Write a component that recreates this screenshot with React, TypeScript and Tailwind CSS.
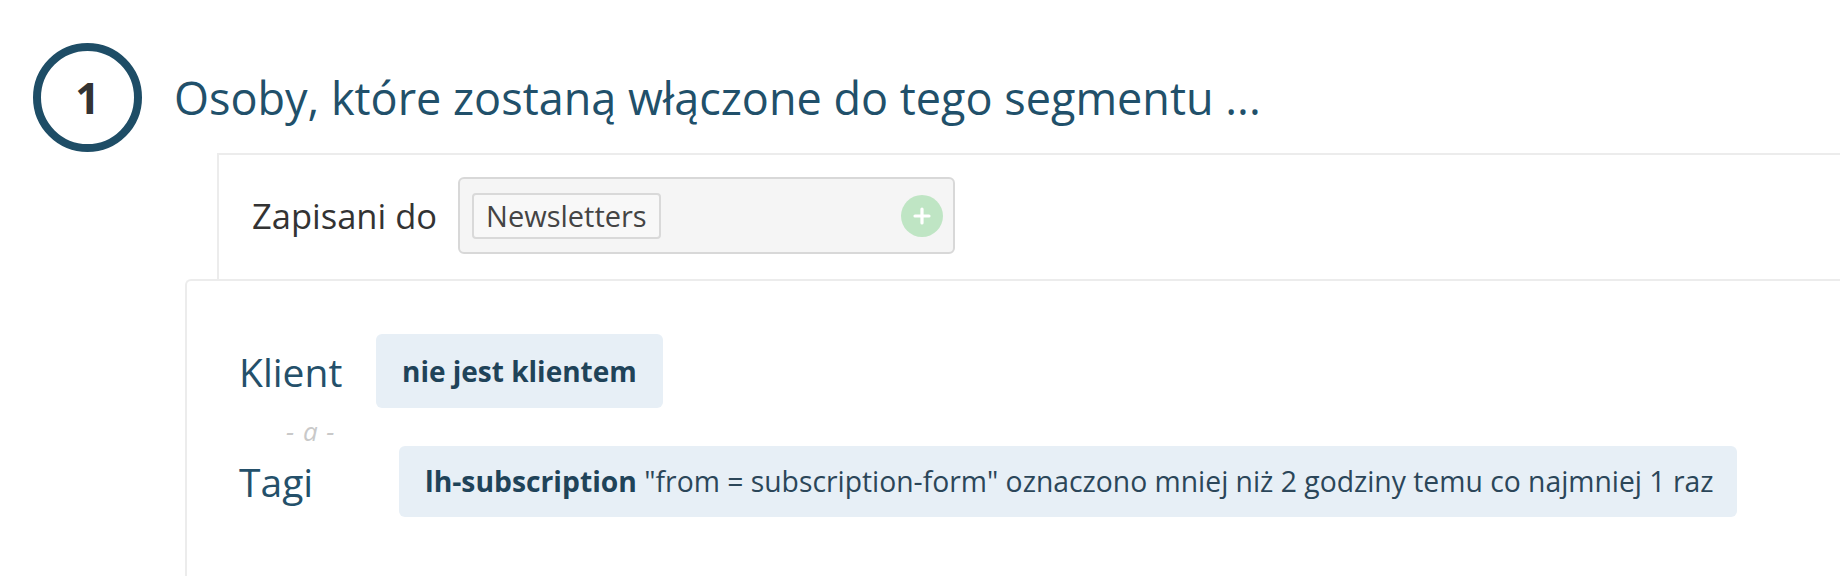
export default function App() {
  return (
    <div className="h-[576px] w-[1840px] overflow-hidden bg-white font-['Open_Sans',sans-serif]">
      <div className="flex items-center pl-[33px] pt-[43px]">
        <div className="flex h-[109px] w-[109px] shrink-0 items-center justify-center rounded-full border-[8px] border-[#1e4d66] text-[43px] font-bold leading-none text-[#333]">
          1
        </div>
        <h1 className="ml-[32px] whitespace-nowrap text-[45px] leading-none text-[#21506a]">
          Osoby, które zostaną włączone do tego segmentu ...
        </h1>
      </div>
      <div className="ml-[217px] mt-px flex h-[126px] items-center border-l-2 border-t-2 border-[#ececec] pb-[3px] pl-[33px]">
        <span className="whitespace-nowrap text-[34.5px] text-[#333]">Zapisani do</span>
        <div className="ml-[21px] flex h-[77px] w-[497px] items-center rounded-[6px] border-2 border-[#d8d8d8] bg-[#f5f5f5] pl-[12px] pr-[10px]">
          <span className="flex h-[46px] items-center rounded-[4px] border-2 border-[#d9d9d9] bg-[#f8f8f8] px-[12px] text-[29px] leading-none text-[#444]">
            Newsletters
          </span>
          <span className="ml-auto flex h-[42px] w-[42px] items-center justify-center rounded-full bg-[#bfe5c4]">
            <svg width="18" height="18" viewBox="0 0 18 18">
              <path d="M9 2v14M2 9h14" stroke="#ffffff" strokeWidth="3.2" strokeLinecap="round" />
            </svg>
          </span>
        </div>
      </div>
      <div className="ml-[185px] h-[300px] rounded-tl-[6px] border-l-2 border-t-2 border-[#ececec] pl-[52px] pt-[53px]">
        <div className="flex h-[74px] items-center">
          <span className="w-[137px] text-[39px] leading-none text-[#24506a]">Klient</span>
          <span className="flex h-[74px] items-center rounded-[6px] bg-[#e7eff6] px-[26px] text-[28px] font-bold leading-none text-[#1f4359]">
            nie jest klientem
          </span>
        </div>
        <div className="flex h-[38px] items-center pl-[47px] pt-[8px] text-[26px] italic leading-none tracking-[1px] text-[#c9c9c9]">
          - a -
        </div>
        <div className="flex h-[71px] items-center">
          <span className="w-[160px] text-[39px] leading-none text-[#24506a]">Tagi</span>
          <span className="flex h-[71px] items-center whitespace-nowrap rounded-[6px] bg-[#e7eff6] pl-[26px] pr-[24px] text-[28.3px] leading-none text-[#2b4659]">
            <b className="font-bold text-[#1f4359]">lh-subscription</b>
            &nbsp;"from = subscription-form" oznaczono mniej niż 2 godziny temu co najmniej 1 raz
          </span>
        </div>
      </div>
    </div>
  );
}
